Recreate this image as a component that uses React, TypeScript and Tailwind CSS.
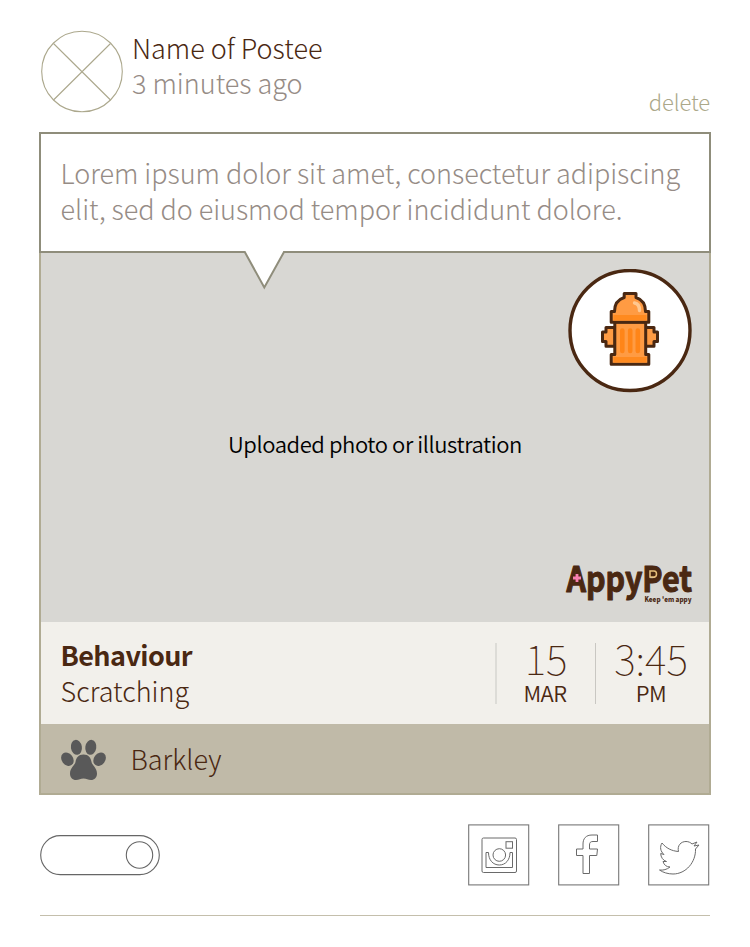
import React from 'react';

function Hydrant() {
  return (
    <svg viewBox="0 0 124 124" className="h-[124px] w-[124px]" fill="none">
      <circle cx="62" cy="61.500" r="60" fill="#fff" stroke="#4a2812" strokeWidth="3.4" />
      <g stroke="#4a2812" strokeWidth="3" strokeLinejoin="round" fill="#ff9b43">
        <path d="M47 58.500H38V63H34.500V72.500H38V77.200H47ZM77.500 58.500H86V63H89.500V72.500H86V77.200H77.500Z" />
        <path d="M46.800 53H77.700V85.500H80.800V95.200H43.200V85.500H46.800Z" />
        <path d="M43.200 42.500H46.500C46.500 35 50 30.500 56.200 28.500V24.500H68V28.500C74 30.500 77.500 35 77.500 42.500H80.800V53.300H43.200Z" />
      </g>
      <path d="M45.500 46H78.500V51.500H45.500ZM45.500 88H78.500V93.400H45.500Z" fill="#ff8a1f" />
      <path d="M54.300 61.500V82M62.200 61.500V82M69.800 61.500V82" stroke="#ff8518" strokeWidth="4.600" strokeLinecap="round" />
      <path d="M66.500 34C70 34.500 71.500 37 71.500 41.500" stroke="#ffc890" strokeWidth="3.400" strokeLinecap="round" />
    </svg>
  );
}

function Logo() {
  return (
    <svg viewBox="0 0 130 52" className="h-[52px] w-[130px] overflow-visible" fill="#4a2812" fontFamily="'Noto Sans CJK SC', sans-serif">
      <text
        x="2.500"
        y="37.500"
        textLength="125.500"
        lengthAdjust="spacingAndGlyphs"
        fontSize="35.500"
        fontWeight="700"
        stroke="#4a2812"
        strokeWidth="1.100"
        strokeLinejoin="round"
      >
        AppyPet
      </text>
      <path d="M12.800 15L18 29H7.500Z" />
      <path d="M13 20V28M9 24H17" stroke="#f77fb0" strokeWidth="2.800" />
      <path d="M86 17H90Q92.500 17 92.500 20T90 23H86Z" fill="#4a2812" stroke="#e8c07a" strokeWidth="1.500" />
      <text x="80.500" y="47.500" fontSize="7" fontWeight="900" textLength="47" lengthAdjust="spacingAndGlyphs">Keep 'em appy</text>
    </svg>
  );
}

function Paw() {
  return (
    <svg viewBox="0 0 46 42" className="relative top-px h-[42px] w-[46px] shrink-0" fill="#595959">
      <ellipse cx="15.400" cy="8.300" rx="5.500" ry="7.500" transform="rotate(-9 15.400 8.300)" />
      <ellipse cx="29.800" cy="8.300" rx="5.500" ry="7.500" transform="rotate(9 29.800 8.300)" />
      <ellipse cx="6.400" cy="20.200" rx="5.700" ry="7.200" transform="rotate(-38 6.400 20.200)" />
      <ellipse cx="38.600" cy="20.200" rx="5.700" ry="7.200" transform="rotate(38 38.600 20.200)" />
      <path d="M22.500 15.500C27.500 15.500 30 19 30.500 23C31 26 36 29 36 34.500C36 38.500 33.500 41 30 41C27 41 25.500 39.600 22.500 39.600S18 41 15 41C11.500 41 9 38.500 9 34.500C9 29 14 26 14.500 23C15 19 17.500 15.500 22.500 15.500Z" />
    </svg>
  );
}

function Social({ label, children }: { label: string; children: React.ReactNode }) {
  return (
    <button aria-label={label} className="h-[62px] w-[62px]">
      <svg viewBox="0 0 62 62" className="h-[62px] w-[62px]" fill="none" stroke="#6a6a6a" strokeWidth="1">
        <rect x="0.700" y="0.900" width="60" height="60" stroke="#777" strokeWidth="1.100" />
        {children}
      </svg>
    </button>
  );
}

export default function App() {
  return (
    <main className="h-[947px] w-[750px] bg-white px-[39px] pt-[30px] font-['Noto_Sans_CJK_SC',sans-serif] text-[27px] leading-9 font-light text-[#4a2812]">
      <header className="flex h-[102px]">
        <svg viewBox="0 0 84 84" className="ml-[1px] h-[84px] w-[84px]" fill="none" stroke="#aca88d" strokeWidth="1.100">
          <circle cx="42" cy="41.500" r="40.300" />
          <path d="M13.500 13.500L70.500 70M70.500 13.500L13.500 70" />
        </svg>
        <div className="ml-2 grow leading-[35px] whitespace-nowrap">
          <p><span>Name of Postee</span></p>
          <p className="text-[#968c86]"><span>3 minutes ago</span></p>
        </div>
        <button className="mt-[53px] mr-px h-9 text-[22px] tracking-[-0.1px] text-[#aba88a]">delete</button>
      </header>

      <article>
        <section className="relative z-10 h-[121px] border-2 border-[#8f8d7b] bg-white pt-[21px] pl-[19.5px] tracking-[-0.04px] whitespace-nowrap text-[#968c86]">
          <p><span>Lorem ipsum dolor sit amet, consectetur adipiscing</span></p>
          <p><span>elit, sed do eiusmod tempor incididunt dolore.</span></p>
          <svg viewBox="0 0 44 42" className="absolute top-[116px] left-[201px] h-[42px] w-11">
            <path d="M3 0H41.500V2L22.300 37.500L2.500 2Z" fill="#fff" />
            <path d="M1.500 2H2.800L22.300 37.500L42 2H43.300" fill="none" stroke="#8f8d7b" strokeWidth="2" />
          </svg>
        </section>
        <div className="border-x-2 border-b-2 border-[#b0ab93]">
          <section className="relative flex h-[369px] items-center justify-center bg-[#d8d7d3] text-[22px] font-[350] text-black">
            <span className="mt-[10px] tracking-[-0.41px]">Uploaded photo or illustration</span>
            <div className="absolute top-[16px] right-[17px]"><Hydrant /></div>
            <div className="absolute right-[15px] bottom-[16px]"><Logo /></div>
          </section>
          <section className="flex h-[102px] bg-[#f2f0eb] pl-[19.5px]">
            <div className="grow pt-[15px]">
              <p className="font-bold tracking-[-0.6px]"><span>Behaviour</span></p>
              <p><span>Scratching</span></p>
            </div>
            <div className="mt-[21px] flex h-[61px] w-[100px] flex-col items-center border-l-2 border-[#dddcd7]">
              <span className="mt-[-3px] text-[41px] leading-[34px] font-thin">15</span>
              <span className="mt-px mr-[2px] text-[22px] leading-[34px] font-[350] tracking-[-0.5px]">MAR</span>
            </div>
            <div className="mt-[21px] flex h-[61px] w-[114px] flex-col items-center border-l border-[#c9c7c2] pr-[3px]">
              <span className="mt-[-3px] text-[41px] leading-[34px] font-thin">3:45</span>
              <span className="mt-px text-[22px] leading-[34px] font-[350] tracking-[-0.5px]">PM</span>
            </div>
          </section>
          <section className="flex h-[69px] items-center bg-[#c0baa8] pl-5">
            <Paw />
            <span className="ml-[23.5px]">Barkley</span>
          </section>
        </div>
      </article>

      <footer className="mt-[29px] ml-px flex h-[92px] w-[670px] justify-between border-b border-[#c4bfac]">
        <svg viewBox="0 0 120 42" className="mt-[11px] h-[42px] w-[120px]" fill="none" stroke="#666" strokeWidth="1.100">
          <rect x="0.700" y="0.600" width="118.600" height="39" rx="19.500" />
          <circle cx="99.500" cy="20" r="13.200" />
        </svg>
        <div className="flex gap-7">
          <Social label="Instagram">
            <rect x="14" y="14" width="34.500" height="34.500" rx="1.500" />
            <rect x="38" y="17.700" width="6.500" height="6.500" />
            <circle cx="31.300" cy="31" r="6.300" />
            <path d="M18 28.500H20.500C20.500 36 25 41 31.300 41S42 36 42 28.500H44.500V43.500H18Z" />
          </Social>
          <Social label="Facebook">
            <path d="M25 49.500V31.500H18.500V25H25V20C25 14.500 28 11 34 11H39.500V17.500H35C32.500 17.500 31.500 18.500 31.500 21V25H39.500L38.800 31.500H31.500V49.500Z" />
          </Social>
          <Social label="Twitter">
            <path d="M11.500 46C15 46.500 19 45.500 22 43C18.500 43 16 41 15 37.500H18.500C15 36.500 12.700 33 12.700 29.500L16 30.500C12.500 27.500 11.500 23 14 19C18 24 23.500 27 30.500 27.500C29 21.500 33 17.500 38 17.500C40.500 17.500 42.500 18.500 44 20L49 18L46 22L51 21L47.500 25C48 38 38 50 25 50C20 50 15 48.500 11.500 46Z" />
          </Social>
        </div>
      </footer>
    </main>
  );
}
